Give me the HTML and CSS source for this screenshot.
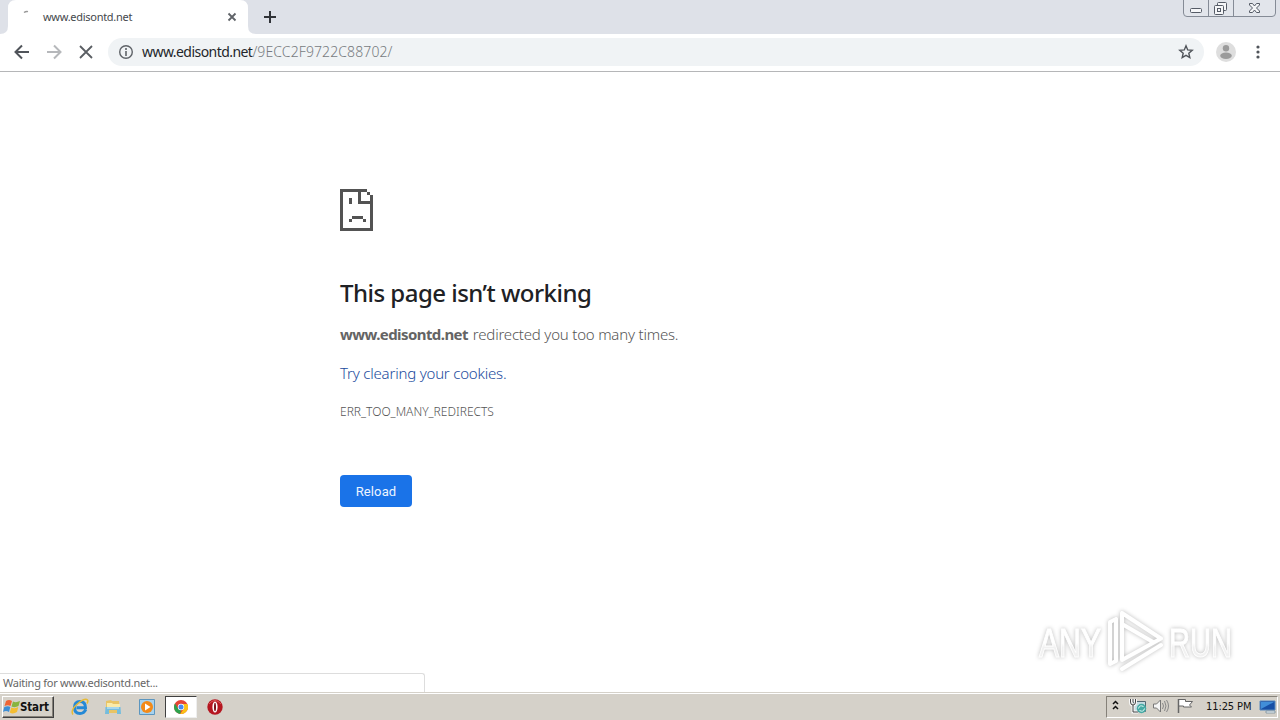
FILE: index.html
```html
<!DOCTYPE html>
<html lang="en">
<head>
<meta charset="utf-8">
<title>www.edisontd.net</title>
<link rel="stylesheet" href="styles.css">
</head>
<body>
<header class="tabstrip">
  <svg class="tab-shape" width="256" height="34" viewBox="0 0 256 34"><path fill="#fff" d="M0 34Q8 34 8 26V8Q8 0 16 0H240Q248 0 248 8V26Q248 34 256 34Z"/></svg>
  <div class="tab">
    <svg class="spinner" width="16" height="16" viewBox="0 0 16 16"><path d="M6 3.500Q8 2 10 2.600" stroke="#999" stroke-width="1.500" fill="none"/></svg>
    <span class="tab-title">www.edisontd.net</span>
    <svg width="10" height="10" viewBox="0 0 10 10"><path d="M1.500 1.500l7 7M8.500 1.500l-7 7" stroke="#5f6368" stroke-width="1.800"/></svg>
  </div>
  <svg class="new-tab" width="14" height="14" viewBox="0 0 14 14"><path d="M7 1v12M1 7h12" stroke="#303338" stroke-width="2"/></svg>
  <svg class="window-controls" width="94" height="18" viewBox="0 0 94 18">
    <path d="M.5 0V13Q.5 16.500 4 16.500H89Q92.500 16.500 92.500 13V0M25.500 0V16M50.500 0V16" fill="#e2e5eb" stroke="#858b96"/>
    <g fill="#f5f6f8" stroke="#555b66"><rect x="7.500" y="8.500" width="11" height="4" rx="1"/><rect x="34.500" y="2.500" width="9" height="8" rx="1"/><rect x="31.500" y="5.500" width="9" height="9" rx="1"/><rect x="34.500" y="8.500" width="3" height="3"/></g>
    <path d="M66.500 3.500h3l2 2.500 2-2.500h3v1.500l-3 3 3 3v1.500h-3l-2-2.500-2 2.500h-3v-1.500l3-3-3-3z" fill="#f5f6f8" stroke="#555b66"/>
  </svg>
</header>
<nav class="toolbar">
  <svg class="nav-icons" width="84" height="16" viewBox="0 0 84 16" fill="none" stroke-width="2">
    <path d="M15 8H2M8 1.500L1.500 8 8 14.500" stroke="#50545a"/>
    <path d="M33 8H46M40 1.500L46.500 8 40 14.500" stroke="#b6b8bb"/>
    <path d="M66 2l12 12M78 2L66 14" stroke="#5a5e63" stroke-width="1.800"/>
  </svg>
  <div class="omnibox">
    <svg width="16" height="16" viewBox="0 0 16 16"><circle cx="8" cy="8" r="6.300" fill="none" stroke="#5f6368" stroke-width="1.400"/><path d="M8 4v2M8 7v5" stroke="#5f6368" stroke-width="1.600"/></svg>
    <div class="url"><span class="host">www.edisontd.net</span><span class="path">/9ECC2F9722C88702/</span></div>
    <svg width="16" height="16" viewBox="0 0 16 16"><path d="M8 1.800l1.700 4.100 4.500.4-3.400 2.900 1 4.400L8 11.300l-3.800 2.300 1-4.400-3.400-2.900 4.500-.4z" fill="none" stroke="#50545a" stroke-width="1.400"/></svg>
  </div>
  <svg class="avatar" width="20" height="20" viewBox="0 0 20 20"><circle cx="10" cy="10" r="10" fill="#dedede"/><circle cx="10" cy="6.200" r="3.200" fill="#9b9b9b"/><ellipse cx="10" cy="13.700" rx="5.800" ry="3.200" fill="#9b9b9b"/></svg>
  <svg width="4" height="14" viewBox="0 0 4 14" fill="#50545a"><circle cx="2" cy="2" r="1.600"/><circle cx="2" cy="7" r="1.600"/><circle cx="2" cy="12" r="1.600"/></svg>
</nav>
<main class="page">
  <section class="error">
    <svg class="sad" width="33" height="42" viewBox="0 0 11 14" shape-rendering="crispEdges" fill="#535353"><path d="M0 0H9V1H7V4H11V14H0ZM1 1V13H10V5H6V1Z" fill-rule="evenodd"/><path d="M9 1h1v1H9zM10 2h1v2h-1zM3 3h1v2H3zM4 9h3.500v1H4zM3 10h1v1H3zM7.500 10h1v1h-1z"/></svg>
    <h1>This page isn’t working</h1>
    <p class="message"><strong>www.edisontd.net</strong> <span>redirected you too many times.</span></p>
    <a class="cookies">Try clearing your cookies.</a>
    <p class="code">ERR_TOO_MANY_REDIRECTS</p>
    <button class="reload">Reload</button>
  </section>
  <div class="status">Waiting for www.edisontd.net...</div>
  <svg class="watermark" width="212" height="76" viewBox="0 -4 212 76">
    <defs><linearGradient id="fade" x1="0" y1="0" x2="0" y2="1"><stop offset=".5" stop-color="#fff"/><stop offset=".6" stop-color="#f1f1f1"/></linearGradient></defs>
    <g class="wm-text"><text x="4" y="50" textLength="62" lengthAdjust="spacingAndGlyphs">ANY</text><text x="134" y="50" textLength="63" lengthAdjust="spacingAndGlyphs">RUN</text></g>
    <g class="wm-mark" fill="none" stroke="#fff" stroke-width="4" stroke-linejoin="round" stroke-linecap="round"><path d="M118 35L87 17V53L126 31.500L87 6V17M81 12L75 15V57L81 54V12M87 62L126 38"/></g>
  </svg>
</main>
<footer class="taskbar">
  <button class="start">
    <svg width="18" height="17" viewBox="0 0 18 17"><path d="M3 3Q6 1 9 3L7.500 8Q5 6.500 1.500 8Z" fill="#ef6535"/><path d="M10 3.500Q13 5 17 3L15.500 8Q12 10 8.500 8.500Z" fill="#88b440"/><path d="M1.300 9Q5 7.500 7.300 9L6 14Q3 12 0 14Z" fill="#3d8ed5"/><path d="M8.300 9.500Q12 11 15.300 9L14 14Q10 16.500 6.800 14.500Z" fill="#f4bd32"/></svg>
    <span>Start</span>
  </button>
  <svg class="ie" width="18" height="18" viewBox="0 0 18 18"><path d="M14.800 11.500Q13 15.500 9 15.500Q3.500 15.500 3.500 9.500T9 3.500T14.500 9.800H5.500" fill="none" stroke="#2489d6" stroke-width="3"/><path d="M2 16.500Q-1 12 7 5.500Q14-.5 16.500 2Q17.500 3 16 5.500" fill="none" stroke="#e7bb36" stroke-width="1.500"/></svg>
  <svg class="explorer" width="18" height="18" viewBox="0 0 18 18"><path d="M2 3l5-1 1 1h7l1 12H2z" fill="#e8c465"/><path d="M3 5h5l1 1h7v5H3z" fill="#faeba8"/><path d="M1.500 9h15l.5 7h-4v-4H5v4H1z" fill="#75bddd"/><path d="M3 10h12" stroke="#d7effb"/></svg>
  <svg class="player" width="16" height="16" viewBox="0 0 16 16"><path d="M.5.500h15v15H.5z" fill="#a7d2ee" stroke="#5c96bf"/><circle cx="8" cy="8" r="6" fill="#f38a18"/><path d="M6 4.500L11.500 8 6 11.500z" fill="#fff"/></svg>
  <div class="chrome-task"><svg width="14" height="14" viewBox="0 0 14 14"><circle cx="7" cy="7" r="7" fill="#e54435"/><path d="M1 3.500L4.300 9 7 9.500 6.300 14A7 7 0 0 1 1 3.500" fill="#2ba24c"/><path d="M7 4h6.300A7 7 0 0 1 6.300 14L9.500 9z" fill="#fbc116"/><circle cx="7" cy="7" r="3.200" fill="#fff"/><circle cx="7" cy="7" r="2.500" fill="#4688f1"/></svg></div>
  <svg class="opera" width="16" height="16" viewBox="0 0 16 16"><circle cx="8" cy="8" r="7.700" fill="#b51620"/><path d="M2 5Q8-2 14 5" fill="none" stroke="#dc5a5a"/><ellipse cx="8" cy="8" rx="2.600" ry="5.500" fill="#fff"/><ellipse cx="8" cy="8" rx="1" ry="4.300" fill="#781018"/></svg>
  <div class="tray">
    <svg width="84" height="18" viewBox="0 0 84 18">
      <path d="M3 6l2.500-2.500L8 6M3 11l2.500-2.500L8 11" fill="none" stroke="#111" stroke-width="1.500"/>
      <g transform="translate(-2 -1)"><path d="M25.500 4.500h12v10h-12z" fill="#c4dce2" stroke="#536873"/><path d="M22.500 2v3q0 3 2.500 3T27.500 5V2M25 2v3M25 8v7h5" fill="none" stroke="#f7f7f7" stroke-width="3"/><path d="M22.500 2v3q0 3 2.500 3T27.500 5V2M25 2v3M25 8v7h5" fill="none" stroke="#444"/><circle cx="33.500" cy="11.500" r="4.700" fill="#46aaa5"/><path d="M30.500 11.500q1-4 5-2M36.500 11.500q-1 4-5 2" fill="none" stroke="#dff7f2"/></g>
      <g transform="translate(-3 -1)"><path d="M46.500 7h3l4-4v12l-4-4h-3z" fill="#f5f5f5" stroke="#777"/><path d="M55.500 6q2 3 0 6M57.500 4q3 5 0 10M59.500 3q4 6 0 12" fill="none" stroke="#888"/></g>
      <g transform="translate(-3 -2)"><path d="M71.500 3.500h7v2h7l-3 3.500 2 2h-8v-1h-5z" fill="#fff" stroke="#666"/><path d="M71.500 3v14" stroke="#666" stroke-width="1.500"/></g>
    </svg>
    <span class="clock">11:25 PM</span>
    <svg width="17" height="14" viewBox="0 0 17 14"><path d="M1 1h15v9H1z" fill="#174fa5" stroke="#5688bd"/><path d="M2 2h13L2 9z" fill="#418ed8"/><path d="M7 11h9v2H7z" fill="#e8f0f5" stroke="#6d8494" stroke-width=".7"/></svg>
  </div>
</footer>
</body>
</html>
```
FILE: styles.css
```css
* { box-sizing: border-box; }
body { margin: 0; width: 1280px; height: 720px; overflow: hidden; display: flex; flex-direction: column; background: #fff; font-family: "DejaVu Sans Condensed", "DejaVu Sans", sans-serif; }
svg { display: block; flex: none; }
h1, p { margin: 0; }
button { border: 0; padding: 0; margin: 0; }
.tabstrip { position: relative; height: 34px; flex: none; background: #dee1e8; display: flex; align-items: center; }
.tab-shape { position: absolute; left: 0; top: 0; }
.tab { position: relative; width: 248px; height: 34px; padding: 0 11px 0 18px; display: flex; align-items: center; }
.spinner { align-self: flex-start; margin-top: 9px; }
.tab-title { margin-left: 9px; width: 184px; padding-bottom: 2px; white-space: nowrap; font: 11px "Noto Sans", sans-serif; letter-spacing: -.28px; color: #45484c; }
.new-tab { margin-left: 15px; }
.window-controls { align-self: flex-start; margin-left: auto; margin-right: 3px; }
.toolbar { height: 38px; flex: none; border-bottom: 1px solid #b5b6b8; padding: 0 20px 1px 14px; display: flex; align-items: center; }
.omnibox { margin-left: 10px; width: 1096px; height: 28px; border-radius: 14px; background: #f0f3f5; padding: 0 10px; display: flex; align-items: center; }
.url { flex: 1; margin-left: 8px; padding-bottom: 2px; font: 14px "Noto Sans", sans-serif; white-space: nowrap; }
.host { color: #24272b; letter-spacing: -.55px; }
.path { color: #777b7f; font-weight: 300; letter-spacing: .1px; }
.avatar { margin-left: 12px; margin-right: 20px; }
.page { position: relative; flex: 1; display: flex; flex-direction: column; }
.error { margin: 117px 0 0 340px; display: flex; flex-direction: column; align-items: flex-start; font-family: "Noto Sans", sans-serif; color: #646464; white-space: nowrap; }
h1 { margin-top: 45px; font: 500 24px/34px "Noto Sans", sans-serif; letter-spacing: -.52px; color: #202124; }
.message { margin-top: 12px; font-size: 15px; line-height: 24px; display: flex; gap: 5px; }
.message strong { letter-spacing: -.58px; }
.message span { font-weight: 300; letter-spacing: -.2px; color: #555; }
.cookies { margin-top: 15px; font-size: 15px; font-weight: 300; line-height: 24px; letter-spacing: -.2px; color: #1b4b9d; }
.code { margin-top: 17px; font-size: 12px; font-weight: 300; line-height: 20px; letter-spacing: 0; color: #555; }
.reload { margin-top: 53px; width: 72px; height: 32px; border-radius: 4px; background: #1a73e8; color: #edf5ff; font: 13px Roboto, sans-serif; letter-spacing: .1px; }
.status { position: absolute; left: 0; bottom: 0; width: 425px; height: 19px; border: 1px solid #ddd; border-left: 0; border-bottom: 0; border-radius: 0 3px 0 0; padding-left: 3px; font: 11px/18px "Noto Sans", sans-serif; letter-spacing: -.25px; color: #666; background: #fff; }
.watermark { position: absolute; left: 1035px; top: 531px; }
.wm-text { font: 40px "Liberation Sans", sans-serif; fill: url(#fade); stroke: #fff; stroke-width: 1px; filter: drop-shadow(0 0 2px #bbb); }
.wm-mark { filter: drop-shadow(0 0 2px #bbb); }
.taskbar { height: 28px; flex: none; background: #d5d1c9; border-top: 1px solid #d5d1c9; box-shadow: inset 0 1px #fff; display: flex; align-items: center; padding: 1px 2px 1px; }
.start { width: 52px; height: 22px; background: #d5d1c9; border: 1px solid; border-color: #fff #404040 #404040 #fff; box-shadow: inset -1px -1px #858179; display: flex; align-items: center; color: #111; font: bold 11.5px "DejaVu Sans Condensed", sans-serif; }
.start span { margin-left: -1px; letter-spacing: -.15px; }
.ie { margin-left: 17px; }
.explorer { margin-left: 15px; }
.player { margin-left: 17px; }
.chrome-task { margin-left: 10px; width: 32px; height: 22px; background: #fff; border: 1px solid; border-color: #404040 #eee #eee #404040; display: flex; align-items: center; justify-content: center; }
.opera { margin-left: 10px; }
.tray { margin-left: auto; width: 172px; height: 22px; border: 1px solid; border-color: #858179 #fff #fff #858179; display: flex; align-items: center; padding-left: 3px; }
.clock { width: 46px; margin-left: 12px; white-space: nowrap; font: 11px "DejaVu Sans Condensed", sans-serif; letter-spacing: -.1px; color: #111; }
.clock + svg { margin-left: 7px; }
```
